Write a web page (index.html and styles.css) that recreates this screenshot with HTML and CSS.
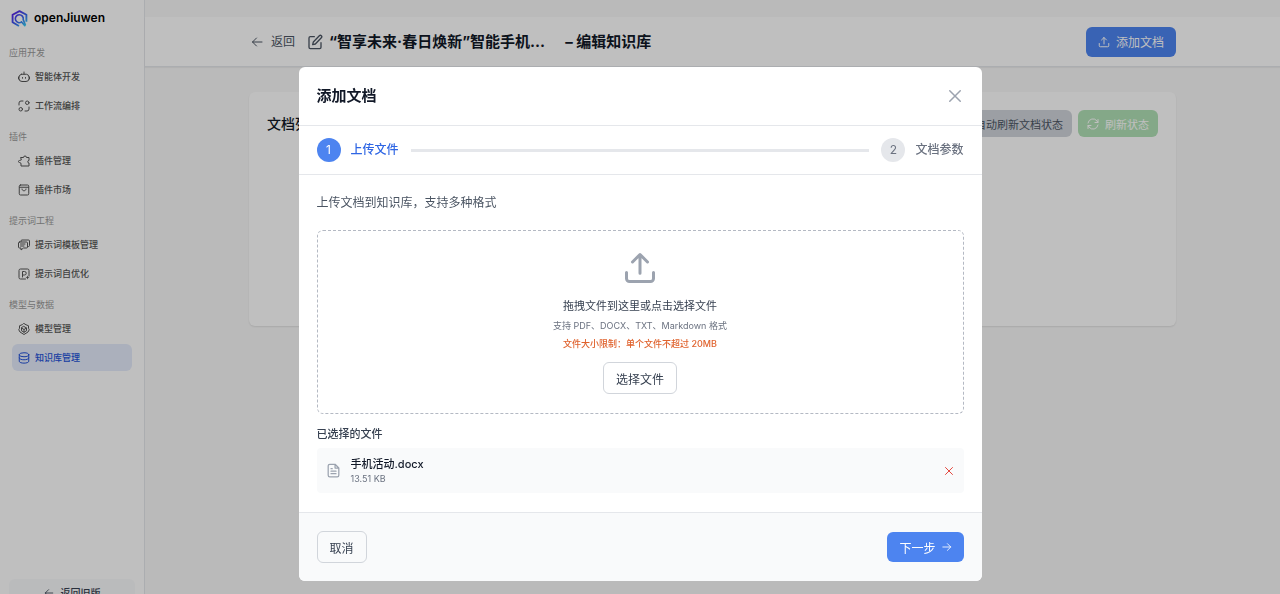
FILE: index.html
```html
<!DOCTYPE html>
<html lang="zh-CN">
<head>
    <meta charset="UTF-8">
    <meta name="viewport" content="width=device-width, initial-scale=1">
    <title>编辑知识库 - openJiuwen</title>
    <link rel="stylesheet" href="styles.css">
</head>
<body>
    <div class="layout">
        <aside class="sidebar">
            <div class="logo">
                <svg class="logo-icon" viewBox="0 0 32 32" fill="none">
                    <defs>
                        <linearGradient id="logoColor" x1="4" y1="4" x2="28" y2="30" gradientUnits="userSpaceOnUse">
                            <stop offset="0" stop-color="#5a1fe8"/>
                            <stop offset="0.55" stop-color="#3a62ee"/>
                            <stop offset="1" stop-color="#35d3f2"/>
                        </linearGradient>
                    </defs>
                    <path d="M15 30L3 23V9l13-7 13 7v13" stroke="url(#logoColor)" stroke-width="3.500" stroke-linejoin="round"/>
                    <path d="M20 22.500a7.500 7.500 0 1 1 3-4.500l4 10M20 22.500l6 7" stroke="url(#logoColor)" stroke-width="3" stroke-linecap="round"/>
                </svg>
                <span>openJiuwen</span>
            </div>
            <nav class="menu">
                <div class="menu-group">
                    <p class="menu-title">应用开发</p>
                    <a class="menu-item" href="#">
                        <svg class="icon" viewBox="0 0 24 24"><path d="M7 6.500h10a6 6 0 0 1 5 5.500v3a6 6 0 0 1-6 6H8a6 6 0 0 1-6-6v-3a6 6 0 0 1 5-5.500zM12 6.500V2M1 12v4M23 12v4M9 13v1.500M15 13v1.500"/></svg>
                        智能体开发
                    </a>
                    <a class="menu-item" href="#">
                        <svg class="icon" viewBox="0 0 24 24"><circle cx="18.500" cy="5.500" r="3.500"/><circle cx="5.500" cy="18.500" r="3.500"/><path d="M2 10V6a4 4 0 0 1 4-4h4M22 14v4a4 4 0 0 1-4 4h-4"/></svg>
                        工作流编排
                    </a>
                </div>
                <div class="menu-group">
                    <p class="menu-title">插件</p>
                    <a class="menu-item" href="#">
                        <svg class="icon" viewBox="0 0 24 24"><path d="M6 5h5a3 3 0 0 1 6 0h5v6a2.500 2.500 0 0 0 0 5v6H6v-5.500l-3-1.500a2 2 0 0 1 0-4l3-1z"/></svg>
                        插件管理
                    </a>
                    <a class="menu-item" href="#">
                        <svg class="icon" viewBox="0 0 24 24"><rect x="2.500" y="2" width="19" height="20" rx="2.500"/><path d="M3 6.500h18M8 10c0 5 8 5 8 0"/></svg>
                        插件市场
                    </a>
                </div>
                <div class="menu-group">
                    <p class="menu-title">提示词工程</p>
                    <a class="menu-item" href="#">
                        <svg class="icon" viewBox="0 0 24 24"><path d="M6 5V4a2 2 0 0 1 2-2h13a2 2 0 0 1 2 2v9a2 2 0 0 1-2 2h-2M3 6h14a2 2 0 0 1 2 2v8a2 2 0 0 1-2 2h-6l-5 4v-4H3a2 2 0 0 1-2-2V8a2 2 0 0 1 2-2zM5 10h9M5 14h7"/></svg>
                        提示词模板管理
                    </a>
                    <a class="menu-item" href="#">
                        <svg class="icon" viewBox="0 0 24 24"><path d="M15 22H5a3 3 0 0 1-3-3V5a3 3 0 0 1 3-3h14a3 3 0 0 1 3 3v11M9 18V7h4a3 3 0 0 1 0 7H9"/><path class="solid" d="M19 15l1.200 2.800L23 19l-2.800 1.200L19 23l-1.200-2.800L15 19l2.800-1.200z"/></svg>
                        提示词自优化
                    </a>
                </div>
                <div class="menu-group">
                    <p class="menu-title">模型与数据</p>
                    <a class="menu-item" href="#">
                        <svg class="icon" viewBox="0 0 24 24"><path d="M12 1l4 2.500 5 2v5l1.500 3L20 18l-4 2.500-4 2.500-4-2.500L4 18l-2.500-4.500 1.500-3v-5l5-2z"/><path d="M12 7l5 3v5.500L12 18.500l-5-3V10zM7 10l5 3 5-3M12 13v5.500"/></svg>
                        模型管理
                    </a>
                    <a class="menu-item active" href="#">
                        <svg class="icon" viewBox="0 0 24 24"><ellipse cx="12" cy="5.500" rx="9.500" ry="4"/><path d="M2.500 5.500v13c0 5 19 5 19 0v-13M2.500 12c0 5 19 5 19 0"/></svg>
                        知识库管理
                    </a>
                </div>
            </nav>
            <button class="old-btn" type="button">
                <svg class="icon" viewBox="0 0 24 24"><path d="M21 12H3M11 4l-8 8 8 8"/></svg>
                返回旧版
            </button>
        </aside>

        <main class="content">
            <header class="topbar">
                <div class="wrap topbar-inner">
                    <a class="back" href="#">
                        <svg class="icon" viewBox="0 0 24 24"><path d="M22 12H3M11 4l-8 8 8 8"/></svg>
                        返回
                    </a>
                    <svg class="icon edit-icon" viewBox="0 0 24 24"><path d="M11 4H5a2 2 0 0 0-2 2v14a2 2 0 0 0 2 2h14a2 2 0 0 0 2-2v-7M18.500 2.700a2 2 0 0 1 3 3L12.500 15 8.500 16l1-4z"/></svg>
                    <h1 class="page-title"><span>“智享未来·春日焕新”智能手机...</span><span>– 编辑知识库</span></h1>
                    <button class="btn btn-blue" type="button">
                        <svg class="icon" viewBox="0 0 24 24"><path d="M2.500 15v4.500a2 2 0 0 0 2 2h15a2 2 0 0 0 2-2V15M12 16V3M7 8l5-5 5 5"/></svg>
                        添加文档
                    </button>
                </div>
            </header>
            <section class="wrap">
                <div class="card">
                    <h2 class="card-title">文档列表</h2>
                    <button class="btn-small btn-gray" type="button">自动刷新文档状态</button>
                    <button class="btn-small btn-green" type="button" disabled>
                        <svg class="icon" viewBox="0 0 24 24"><path d="M2 10a10 10 0 0 1 18-4l2 3M22 3v6h-6M22 14a10 10 0 0 1-18 4l-2-3M2 21v-6h6"/></svg>
                        刷新状态
                    </button>
                </div>
            </section>
        </main>
    </div>

    <div class="mask">
        <div class="modal" role="dialog" aria-modal="true" aria-labelledby="modalTitle">
            <div class="modal-header">
                <h2 id="modalTitle">添加文档</h2>
                <button class="close" type="button" aria-label="关闭">
                    <svg class="icon" viewBox="0 0 24 24"><path d="M5 5l14 14M19 5L5 19"/></svg>
                </button>
            </div>
            <div class="steps">
                <span class="step-num current">1</span>
                <span class="step-text current-text">上传文件</span>
                <span class="step-line"></span>
                <span class="step-num">2</span>
                <span class="step-text">文档参数</span>
            </div>
            <div class="modal-body">
                <p class="desc">上传文档到知识库，支持多种格式</p>
                <div class="dropzone">
                    <svg class="icon upload-icon" viewBox="0 0 24 24"><path d="M3 15v4a2 2 0 0 0 2 2h14a2 2 0 0 0 2-2v-4M12 15.500V3M7 8l5-5 5 5"/></svg>
                    <p class="drop-text">拖拽文件到这里或点击选择文件</p>
                    <p class="drop-type">支持 PDF、DOCX、TXT、Markdown 格式</p>
                    <p class="drop-limit">文件大小限制：单个文件不超过 20MB</p>
                    <button class="btn-line" type="button">选择文件</button>
                </div>
                <h3 class="list-title">已选择的文件</h3>
                <div class="file">
                    <svg class="icon file-icon" viewBox="0 0 24 24"><path d="M14.500 2H6a2.500 2.500 0 0 0-2.500 2.500v15A2.500 2.500 0 0 0 6 22h12a2.500 2.500 0 0 0 2.500-2.500V8zM14.500 2v6h6M8 9h2M8 13h8M8 17h8"/></svg>
                    <div class="file-info">
                        <p class="file-name">手机活动.docx</p>
                        <p class="file-size">13.51 KB</p>
                    </div>
                    <button class="remove" type="button" aria-label="移除">
                        <svg class="icon" viewBox="0 0 24 24"><path d="M5 5l14 14M19 5L5 19"/></svg>
                    </button>
                </div>
            </div>
            <div class="modal-footer">
                <button class="btn-line" type="button">取消</button>
                <button class="btn btn-next" type="button">
                    下一步
                    <svg class="icon" viewBox="0 0 24 24"><path d="M2 12h19M13 4l8 8-8 8"/></svg>
                </button>
            </div>
        </div>
    </div>
</body>
</html>
```
FILE: styles.css
```css
*{
    padding:0;
    margin:0;
    box-sizing:border-box;
}
body{
    font-family:Inter,"Noto Sans CJK SC",sans-serif;
    font-size:12px;
    line-height:18px;
    color:#111827;
    background:#f9f9f9;
    height:100vh;
    overflow:hidden;
}
button{
    font-family:inherit;
    border:none;
    background:transparent;
    cursor:pointer;
}
a{
    color:inherit;
    text-decoration:none;
}
.icon{
    width:12px;
    height:12px;
    flex:none;
    fill:none;
    stroke:currentColor;
    stroke-width:2;
    stroke-linecap:round;
    stroke-linejoin:round;
}
.icon .solid{
    fill:currentColor;
    stroke:none;
}
.layout{
    display:flex;
}
/* 侧边栏 */
.sidebar{
    width:145px;
    height:calc(100vh + 24px);
    flex:none;
    display:flex;
    flex-direction:column;
    padding:9px 9px 12px;
    background:#fff;
    border-right:1px solid #e5e7eb;
}
.logo{
    display:flex;
    align-items:center;
    gap:6px;
    padding-left:2px;
    margin-bottom:19px;
    font-size:12px;
    font-weight:600;
    color:#000;
}
.logo-icon{
    width:17px;
    height:17px;
}
.menu{
    flex:1;
    display:flex;
    flex-direction:column;
    gap:11px;
}
.menu-group{
    display:flex;
    flex-direction:column;
    gap:2px;
    font-size:9px;
}
.menu-title{
    line-height:13px;
    margin-bottom:2px;
    color:#999;
}
.menu-item{
    display:flex;
    align-items:center;
    gap:5px;
    height:27px;
    margin:0 3px;
    padding:0 6px;
    border-radius:6px;
    font-weight:500;
    color:#555;
}
.menu-item.active{
    color:#2251d8;
    background:#e4ebfb;
}
.old-btn{
    display:flex;
    align-items:center;
    justify-content:center;
    gap:7px;
    height:27px;
    border-radius:6px;
    background:#f9fafb;
    font-size:10px;
    font-weight:500;
    color:#374151;
}
.old-btn .icon{
    width:10px;
    height:10px;
}
/* 主内容 */
.content{
    flex:1;
    padding-top:17px;
}
.wrap{
    max-width:973px;
    margin:0 auto;
    padding:0 23px;
}
.topbar{
    margin-bottom:25px;
    background:#fff;
    border-bottom:1px solid #e5e7eb;
    box-shadow:0 1px 1px rgba(0,0,0,0.05);
}
.topbar-inner{
    display:flex;
    align-items:center;
    height:49px;
}
.back{
    display:flex;
    align-items:center;
    gap:8px;
    padding-left:2px;
    margin-right:12px;
    color:#4b5563;
}
.edit-icon{
    width:16px;
    height:16px;
    margin-right:6px;
    color:#4b5563;
}
.page-title{
    flex:1;
    display:flex;
    gap:20px;
    font-size:15px;
    font-weight:700;
}
.btn{
    display:flex;
    align-items:center;
    justify-content:center;
    gap:6px;
    height:30px;
    padding:0 12px;
    border-radius:6px;
    font-size:12px;
    color:#fff;
    background:#4d84f0;
}
.card{
    display:flex;
    align-items:flex-start;
    gap:6px;
    min-height:234px;
    padding:18px;
    background:#fff;
    border-radius:6px;
    box-shadow:0 1px 2px rgba(0,0,0,0.1);
}
.card-title{
    flex:1;
    font-size:14px;
    line-height:27px;
    font-weight:500;
}
.btn-small{
    display:flex;
    align-items:center;
    gap:6px;
    height:27px;
    padding:0 9px;
    border-radius:6px;
    font-size:11px;
}
.btn-gray{
    background:#d1d5db;
    color:#4b5563;
}
.btn-green{
    background:#b1e1b6;
    color:#fff;
}
/* 弹窗 */
.mask{
    position:fixed;
    inset:0;
    display:flex;
    justify-content:center;
    align-items:flex-start;
    padding-top:67px;
    background:rgba(0,0,0,0.25);
}
.modal{
    width:100%;
    max-width:683px;
    background:#fff;
    border-radius:6px;
    overflow:hidden;
}
.modal-header{
    display:flex;
    align-items:center;
    justify-content:space-between;
    height:59px;
    padding:0 18px;
    border-bottom:1px solid #e5e7eb;
}
.modal-header h2{
    font-size:15px;
    font-weight:700;
}
.close{
    height:18px;
    color:#9ca3af;
}
.close .icon{
    width:18px;
    height:18px;
}
.steps{
    display:flex;
    align-items:center;
    padding:12px 18px;
    border-bottom:1px solid #e5e7eb;
}
.step-num{
    width:24px;
    height:24px;
    border-radius:50%;
    line-height:24px;
    text-align:center;
    color:#6b7280;
    background:#e5e7eb;
}
.step-num.current{
    color:#fff;
    background:#4d84f0;
}
.step-text{
    margin-left:10px;
    font-weight:500;
    color:#6b7280;
}
.step-text.current-text{
    color:#2f66e4;
}
.step-line{
    flex:1;
    height:3px;
    margin:0 12px;
    background:#e5e7eb;
}
.modal-body{
    padding:19px 18px;
}
.desc{
    margin-bottom:18px;
    color:#4b5563;
}
.dropzone{
    display:flex;
    flex-direction:column;
    align-items:center;
    padding:19px;
    border:1px dashed #b4b9c3;
    border-radius:6px;
}
.upload-icon{
    width:36px;
    height:36px;
    margin-bottom:12px;
    color:#9ca3af;
}
.drop-text{
    margin-bottom:5px;
    font-size:11px;
    line-height:16px;
    color:#374151;
}
.drop-type{
    margin-bottom:5px;
    font-size:9px;
    line-height:13px;
    color:#6b7280;
}
.drop-limit{
    margin-bottom:12px;
    font-size:9px;
    line-height:13px;
    font-weight:500;
    color:#e0622d;
}
.btn-line{
    height:32px;
    padding:0 12px;
    border:1px solid #d1d5db;
    border-radius:6px;
    font-size:12px;
    color:#374151;
}
.list-title{
    margin:12px 0 6px;
    font-size:11px;
    line-height:16px;
    font-weight:500;
    color:#374151;
}
.file{
    display:flex;
    align-items:center;
    padding:8px 9px;
    border-radius:4px;
    background:#f9fafb;
}
.file-icon{
    width:15px;
    height:15px;
    margin-right:10px;
    color:#9ca3af;
}
.file-info{
    flex:1;
}
.file-name{
    font-size:11px;
    line-height:16px;
    font-weight:500;
}
.file-size{
    font-size:9px;
    line-height:13px;
    color:#6b7280;
}
.remove{
    display:flex;
    color:#e4483f;
}
.modal-footer{
    display:flex;
    align-items:center;
    justify-content:space-between;
    padding:18px;
    background:#f9fafb;
    border-top:1px solid #e5e7eb;
}
.btn-next .icon{
    width:10px;
    height:10px;
}
```
